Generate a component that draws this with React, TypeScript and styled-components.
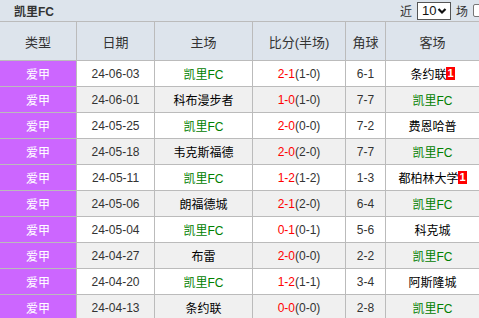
import React from "react";
import styled, { createGlobalStyle } from "styled-components";

const Global = createGlobalStyle`
  html, body { margin: 0; padding: 0; background: #fff; }
  body { font-family: "Liberation Sans", "Noto Sans CJK SC", sans-serif; font-size: 12px; color: #333; }
`;

const Wrap = styled.div`
  width: 479px;
  overflow: hidden;
`;

const TitleBar = styled.div`
  height: 21px;
  background: #dde4ec;
  border-bottom: 1px solid #bbb;
  display: flex;
  align-items: center;
  padding-left: 14px;
  box-sizing: content-box;
  white-space: nowrap;
`;

const Title = styled.div`
  font-weight: bold;
  font-size: 12px;
  color: #333;
  flex: 1;
`;

const Controls = styled.div`
  display: flex;
  align-items: center;
  gap: 5px;
  margin-right: -7px;
  font-size: 12px;
  color: #333;
`;

const FakeSelect = styled.div`
  width: 34px;
  height: 18px;
  box-sizing: border-box;
  border: 1px solid #555;
  background: #fff;
  display: flex;
  align-items: center;
  justify-content: space-between;
  padding: 0 3px 0 4px;
  font-size: 13px;
  color: #111;
`;

const Box = styled.div`
  width: 13px;
  height: 13px;
  box-sizing: border-box;
  border: 1px solid #767676;
  border-radius: 2px;
  background: #fff;
`;

const Row = styled.div<{ $head?: boolean; $alt?: boolean }>`
  display: grid;
  grid-template-columns: 77px 78px 98px 93px 40px 93px;
  height: ${(p) => (p.$head ? 39 : 26)}px;
  background: ${(p) => (p.$head ? "#dde4ec" : p.$alt ? "#f0f0f0" : "#fff")};
`;

const Cell = styled.div<{ $type?: boolean }>`
  box-sizing: border-box;
  border-right: 1px solid #bbb;
  border-bottom: 1px solid #bbb;
  display: flex;
  align-items: center;
  justify-content: center;
  white-space: nowrap;
  font-size: 12px;
  color: #333;
  background: ${(p) => (p.$type ? "#cc66ff" : "transparent")};
  ${(p) => (p.$type ? "color: #fff;" : "")}
  &:last-child { border-right: none; }
`;

const HeadCell = styled(Cell)`
  font-size: 13px;
  color: #333;
`;

const Team = styled.span<{ $home?: boolean }>`
  color: ${(p) => (p.$home ? "#008000" : "#000")};
  font-size: 12px;
  display: inline-flex;
  align-items: center;
`;

const Red = styled.span`
  color: #ff0000;
`;

const Badge = styled.span`
  display: inline-block;
  background: #ff0000;
  color: #fff;
  font-weight: bold;
  font-size: 11px;
  line-height: 13px;
  height: 13px;
  padding: 0 1px;
`;

type M = { d: string; h: string; a: string; s: string; ht: string; c: string; hb?: string; ab?: string };

const data: M[] = [
  { d: "24-06-03", h: "凯里FC", a: "条约联", s: "2-1", ht: "(1-0)", c: "6-1", ab: "1" },
  { d: "24-06-01", h: "科布漫步者", a: "凯里FC", s: "1-0", ht: "(1-0)", c: "7-7" },
  { d: "24-05-25", h: "凯里FC", a: "费恩哈普", s: "2-0", ht: "(0-0)", c: "7-2" },
  { d: "24-05-18", h: "韦克斯福德", a: "凯里FC", s: "2-0", ht: "(2-0)", c: "7-7" },
  { d: "24-05-11", h: "凯里FC", a: "都柏林大学", s: "1-2", ht: "(1-2)", c: "1-3", ab: "1" },
  { d: "24-05-06", h: "朗福德城", a: "凯里FC", s: "2-1", ht: "(2-0)", c: "6-4" },
  { d: "24-05-04", h: "凯里FC", a: "科克城", s: "0-1", ht: "(0-1)", c: "5-6" },
  { d: "24-04-27", h: "布雷", a: "凯里FC", s: "2-0", ht: "(0-0)", c: "2-2" },
  { d: "24-04-20", h: "凯里FC", a: "阿斯隆城", s: "1-2", ht: "(1-1)", c: "3-4" },
  { d: "24-04-13", h: "条约联", a: "凯里FC", s: "0-0", ht: "(0-0)", c: "2-8" },
];

const TeamName = ({ name, badge }: { name: string; badge?: string }) => (
  <Team $home={name === "凯里FC"}>
    {name}
    {badge && <Badge>{badge}</Badge>}
  </Team>
);

export default function App() {
  return (
    <Wrap>
      <Global />
      <TitleBar>
        <Title>凯里FC</Title>
        <Controls>
          <span>近</span>
          <FakeSelect>
            <span>10</span>
            <svg width="10" height="8" viewBox="0 0 10 8">
              <path d="M1.5 2 L5 5.5 L8.5 2" fill="none" stroke="#111" strokeWidth="2.2" />
            </svg>
          </FakeSelect>
          <span>场</span>
          <Box />
        </Controls>
      </TitleBar>
      <Row $head>
        <HeadCell>类型</HeadCell>
        <HeadCell>日期</HeadCell>
        <HeadCell>主场</HeadCell>
        <HeadCell>比分(半场)</HeadCell>
        <HeadCell>角球</HeadCell>
        <HeadCell>客场</HeadCell>
      </Row>
      {data.map((m, i) => (
        <Row key={i} $alt={i % 2 === 1}>
          <Cell $type>爱甲</Cell>
          <Cell>{m.d}</Cell>
          <Cell>
            <TeamName name={m.h} badge={m.hb} />
          </Cell>
          <Cell>
            <Red>{m.s}</Red>
            {m.ht}
          </Cell>
          <Cell>{m.c}</Cell>
          <Cell>
            <TeamName name={m.a} badge={m.ab} />
          </Cell>
        </Row>
      ))}
    </Wrap>
  );
}
